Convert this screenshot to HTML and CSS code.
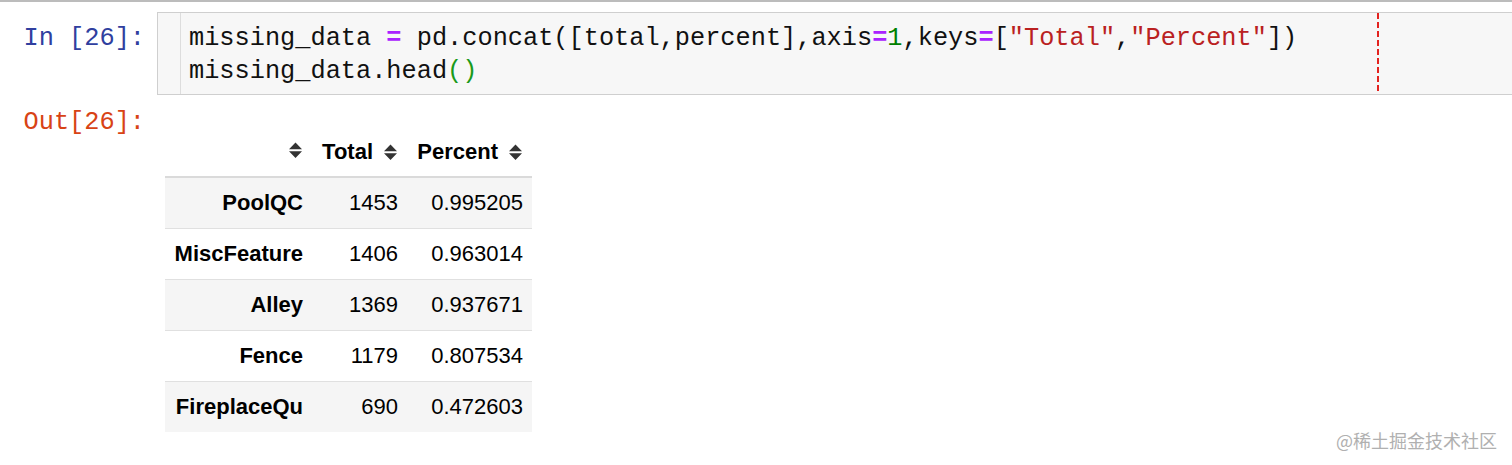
FILE: index.html
```html
<!DOCTYPE html>
<html>
<head>
<meta charset="utf-8">
<link rel="stylesheet" href="styles.css">
</head>
<body>
<div class="topline"></div>
<div class="cell input-cell">
  <div class="prompt in-prompt">In&nbsp;[26]:</div>
  <div class="editor">
    <div class="gutter"></div>
    <pre class="code">missing_data <span class="op">=</span> pd.concat([total,percent],axis<span class="op">=</span><span class="num">1</span>,keys<span class="op">=</span>[<span class="str">"Total"</span>,<span class="str">"Percent"</span>])
missing_data.head<span class="br">()</span></pre>
    <div class="ruler"></div>
  </div>
</div>
<div class="cell output-cell">
  <div class="prompt out-prompt">Out[26]:</div>
  <div class="output-area">
    <table class="df">
      <colgroup><col class="c1"><col class="c2"><col class="c3"></colgroup>
      <thead>
        <tr>
          <th><span class="hd"><svg class="sort" viewBox="0 0 15 17"><path d="M7.5 0.5 L14 7.2 L1 7.2 Z M1 9.3 L14 9.3 L7.5 16 Z"/></svg></span></th>
          <th><span class="hd">Total<svg class="sort" viewBox="0 0 15 17"><path d="M7.5 0.5 L14 7.2 L1 7.2 Z M1 9.3 L14 9.3 L7.5 16 Z"/></svg></span></th>
          <th><span class="hd">Percent<svg class="sort" viewBox="0 0 15 17"><path d="M7.5 0.5 L14 7.2 L1 7.2 Z M1 9.3 L14 9.3 L7.5 16 Z"/></svg></span></th>
        </tr>
      </thead>
      <tbody>
        <tr><th>PoolQC</th><td>1453</td><td>0.995205</td></tr>
        <tr><th>MiscFeature</th><td>1406</td><td>0.963014</td></tr>
        <tr><th>Alley</th><td>1369</td><td>0.937671</td></tr>
        <tr><th>Fence</th><td>1179</td><td>0.807534</td></tr>
        <tr><th>FireplaceQu</th><td>690</td><td>0.472603</td></tr>
      </tbody>
    </table>
  </div>
</div>
<div class="watermark">@稀土掘金技术社区</div>
</body>
</html>
```

FILE: styles.css
```css
html, body {
  margin: 0;
  padding: 0;
  background: #ffffff;
  overflow: hidden;
}

body {
  width: 1512px;
  height: 465px;
  position: relative;
  font-family: "Liberation Sans", Arial, sans-serif;
}

.topline {
  height: 2px;
  background: #bcbcbc;
}

.cell {
  display: flex;
  align-items: flex-start;
}

.input-cell {
  margin-top: 10px;
}

.prompt {
  width: 157px;
  flex: none;
  box-sizing: border-box;
  padding-right: 12px;
  text-align: right;
  font-family: "Liberation Mono", "Courier New", monospace;
  font-size: 25.3px;
  line-height: 33px;
}

.in-prompt {
  color: #303f9f;
  padding-top: 10px;
}

.out-prompt {
  color: #d84315;
  padding-top: 1px;
}

.editor {
  flex: 1;
  position: relative;
  display: flex;
  background: #f7f7f7;
  border: 1px solid #cfcfcf;
  border-right: none;
  height: 81px;
}

.gutter {
  width: 22px;
  flex: none;
  background: #f7f7f7;
  border-right: 1px solid #dddddd;
}

.code {
  margin: 0;
  padding: 9px 0 0 8px;
  font-family: "Liberation Mono", "Courier New", monospace;
  font-size: 25.3px;
  line-height: 33px;
  color: #111111;
}

.op {
  color: #aa22ff;
  font-weight: bold;
}

.num {
  color: #008000;
}

.str {
  color: #ba2121;
}

.br {
  color: #1a9a1a;
}

.ruler {
  position: absolute;
  left: 1219px;
  top: 0;
  bottom: 0;
  width: 2px;
  background: repeating-linear-gradient(to bottom, #e3231f 0 6px, transparent 6px 9px);
}

.output-cell {
  margin-top: 10px;
}

.output-area {
  padding-left: 8px;
  padding-top: 23px;
}

.df {
  border-collapse: collapse;
  table-layout: fixed;
  width: 367px;
  font-size: 22px;
  color: #000000;
}

.c1 { width: 147px; }
.c2 { width: 95px; }
.c3 { width: 125px; }

.df th,
.df td {
  padding: 0 9px;
  text-align: right;
  vertical-align: middle;
  white-space: nowrap;
}

.df thead th {
  height: 48px;
  font-weight: bold;
  border-bottom: 2px solid #dadada;
}

.hd {
  display: inline-flex;
  align-items: center;
  gap: 10px;
}

.sort {
  width: 15px;
  height: 17px;
  fill: #333333;
  display: block;
}

.df tbody th {
  font-weight: bold;
}

.df tbody th,
.df tbody td {
  height: 50px;
}

.df tbody tr + tr th,
.df tbody tr + tr td {
  border-top: 1px solid #e0e0e0;
}

.df tbody tr:nth-child(odd) {
  background: #f5f5f5;
}

.watermark {
  position: absolute;
  right: 15px;
  top: 428px;
  font-family: "Noto Sans CJK SC", sans-serif;
  font-size: 18px;
  line-height: 24px;
  color: #b0b0b0;
}
```
